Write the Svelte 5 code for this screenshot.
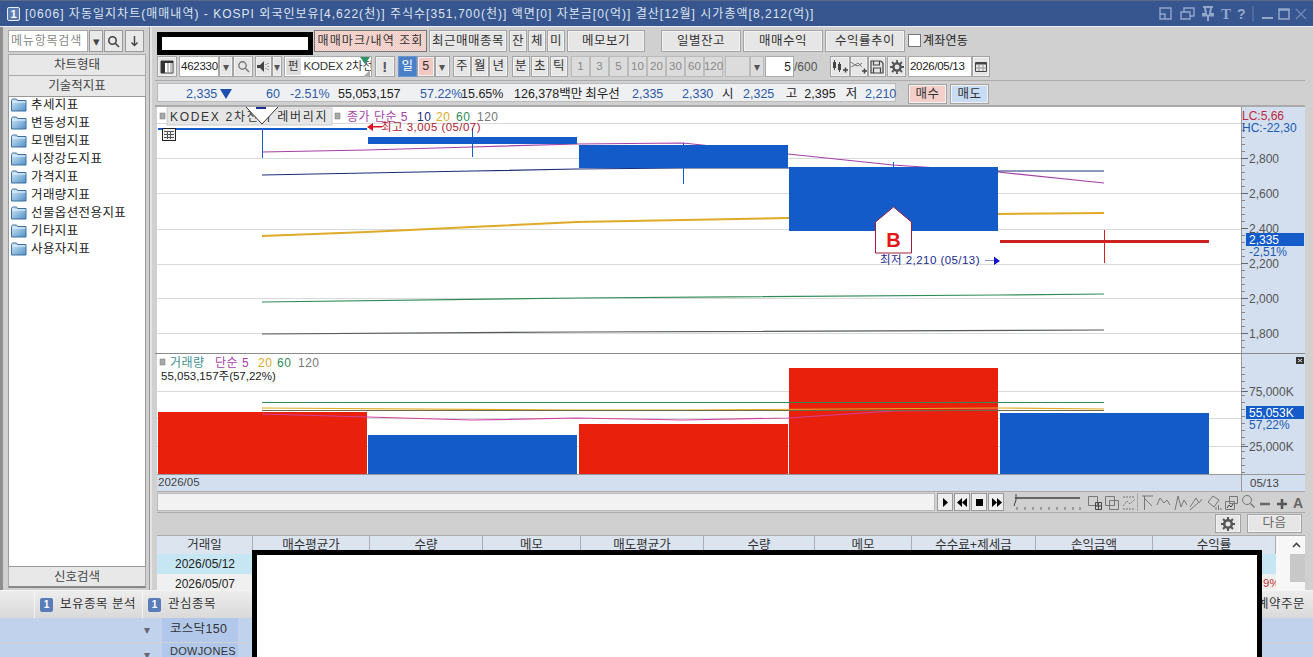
<script>
  const flow = (items, start) => {
    let cur = start;
    return items.map((i) => {
      const r = { ...i, w: i.x1 - i.x0, ml: i.x0 - cur };
      cur = i.x1;
      return r;
    });
  };
  const box = (r) => `width:${r.w}px;margin-left:${r.ml}px`;

  const row1 = flow([
    { t: '매매마크/내역 조회', x0: 314, x1: 427, c: 'pinkdot' },
    { t: '최근매매종목', x0: 429, x1: 507 },
    { t: '잔', x0: 509, x1: 527 },
    { t: '체', x0: 528, x1: 546 },
    { t: '미', x0: 547, x1: 565 },
    { t: '메모보기', x0: 567, x1: 645 },
    { t: '일별잔고', x0: 661, x1: 741 },
    { t: '매매수익', x0: 743, x1: 823 },
    { t: '수익률추이', x0: 825, x1: 905 }
  ], 314);

  const row2a = flow([
    { t: '!', x0: 375, x1: 395, c: 'bang' },
    { t: '일', x0: 398, x1: 417, c: 'day' },
    { t: '5', x0: 417, x1: 435, c: 'pink' },
    { t: '▾', x0: 435, x1: 450, c: 'arrow' },
    { t: '주', x0: 453, x1: 471 },
    { t: '월', x0: 471, x1: 489 },
    { t: '년', x0: 489, x1: 508 },
    { t: '분', x0: 512, x1: 530 },
    { t: '초', x0: 531, x1: 549 },
    { t: '틱', x0: 550, x1: 568 },
    { t: '1', x0: 571, x1: 590, c: 'off' },
    { t: '3', x0: 590, x1: 609, c: 'off' },
    { t: '5', x0: 609, x1: 628, c: 'off' },
    { t: '10', x0: 628, x1: 647, c: 'off' },
    { t: '20', x0: 647, x1: 666, c: 'off' },
    { t: '30', x0: 666, x1: 685, c: 'off' },
    { t: '60', x0: 685, x1: 704, c: 'off' },
    { t: '120', x0: 704, x1: 723, c: 'off' },
    { t: '', x0: 725, x1: 750, c: 'off' },
    { t: '▾', x0: 750, x1: 764, c: 'off arrow' }
  ], 372);

  const info = flow([
    { t: '2,335', x0: 186, x1: 232, c: 'b down' },
    { t: '60', x0: 266, x1: 279, c: 'b' },
    { t: '-2.51%', x0: 290, x1: 328, c: 'b' },
    { t: '55,053,157', x0: 338, x1: 400 },
    { t: '57.22%', x0: 420, x1: 458, c: 'b' },
    { t: '15.65%', x0: 461, x1: 498 },
    { t: '126,378백만', x0: 514, x1: 579 },
    { t: '최우선', x0: 584, x1: 621 },
    { t: '2,335', x0: 632, x1: 663, c: 'b' },
    { t: '2,330', x0: 682, x1: 713, c: 'b' },
    { t: '시', x0: 722, x1: 733 },
    { t: '2,325', x0: 743, x1: 774, c: 'b' },
    { t: '고', x0: 785, x1: 798 },
    { t: '2,395', x0: 804, x1: 836 },
    { t: '저', x0: 845, x1: 858 },
    { t: '2,210', x0: 865, x1: 896, c: 'b' }
  ], 157);

  const folders = ['추세지표', '변동성지표', '모멘텀지표', '시장강도지표', '가격지표', '거래량지표', '선물옵션전용지표', '기타지표', '사용자지표'];

  const pts = (a) => a.map((p) => p.join(',')).join(' ');
  const candles = [
    { x: 158, w: 209, y: 128, h: 2 },
    { x: 368, w: 209, y: 137, h: 7 },
    { x: 579, w: 209, y: 145, h: 23 },
    { x: 789, w: 209, y: 167, h: 64 }
  ];
  const wicks = [[262, 129, 158], [472, 128, 157], [683, 143, 184], [893, 162, 168]];
  const ma = [
    { s: '#a63fa6', w: 1.2, p: [[262, 152], [367, 150], [472, 147], [577, 144], [683, 143], [788, 154], [893, 165], [998, 172], [1104, 183]] },
    { s: '#1a2f7a', w: 1.2, p: [[262, 175], [367, 173], [472, 171], [577, 169], [683, 168], [788, 168], [893, 169], [998, 171], [1104, 171]] },
    { s: '#e0aa28', w: 2, p: [[262, 236], [367, 232], [472, 227], [577, 222], [683, 220], [788, 218], [893, 216], [998, 214], [1104, 213]] },
    { s: '#2e8b57', w: 1.2, p: [[262, 302], [577, 298], [998, 295], [1104, 294]] },
    { s: '#555c55', w: 1.2, p: [[262, 334], [577, 332], [1104, 330]] }
  ];
  const grid = [123, 158, 193, 229, 264, 298, 333];
  const yLabels = [[158, '2,800'], [193, '2,600'], [228, '2,400'], [263, '2,200'], [298, '2,000'], [333, '1,800']];
  const ticks = Array.from({ length: 34 }, (_, i) => 123 + i * 7);
  const volTicks = Array.from({ length: 16 }, (_, i) => 367 + i * 7);
  const bars = [
    { x: 158, w: 209, y: 412, f: '#e8200c' },
    { x: 368, w: 209, y: 435, f: '#125bc8' },
    { x: 579, w: 209, y: 424, f: '#e8200c' },
    { x: 789, w: 209, y: 368, f: '#e8200c' },
    { x: 1000, w: 209, y: 413, f: '#125bc8' }
  ];
  const vma = [
    { s: '#d040a0', p: [[262, 414], [367, 417], [472, 420], [577, 418], [683, 420], [788, 418], [893, 411], [998, 410]] },
    { s: '#e0aa28', p: [[262, 408], [577, 410], [683, 410], [998, 408], [1104, 409]] },
    { s: '#2e8b57', p: [[262, 402.5], [1104, 402.5]] },
    { s: '#6b6b4a', p: [[262, 410.5], [1104, 410.5]] }
  ];
  const cols = [
    ['거래일', 96], ['매수평균가', 117], ['수량', 113], ['메모', 98], ['매도평균가', 123],
    ['수량', 111], ['메모', 97], ['수수료+제세금', 124], ['손익금액', 117], ['수익률', 123]
  ];
</script>

<div class="app">
  <header class="title">
    <span class="badge">1</span>
    <span class="ttext">[0606] 자동일지차트(매매내역) - KOSPI 외국인보유[4,622(천)] 주식수[351,700(천)] 액면[0] 자본금[0(억)] 결산[12월] 시가총액[8,212(억)]</span>
    <svg class="winbtns" width="155" height="18" viewBox="0 0 155 18" fill="none" stroke="#93a6cc" stroke-width="1.4">
      <path d="M1 3h11v11H1zM1 9h5v5" />
      <path d="M22 7v7h9V7zM25 7V3h10v8h-4" />
      <path d="M44 2h10M46 2l1 7h-3v1.500h10V9h-3l1-7M49 10v6" stroke-width="2" />
      <text x="62" y="14" class="wt">T</text>
      <text x="78" y="14" class="wq">?</text>
      <path d="M94 1v15" stroke="#5b73a6" />
      <path d="M103 13h11" stroke-width="2" />
      <path d="M120 4h10v10h-10z M120 5h10" stroke-width="1.500" />
      <path d="M137 4l10 10M147 4l-10 10" stroke="#7189b8" />
    </svg>
  </header>

  <div class="body">
    <aside class="side">
      <div class="searchrow">
        <span class="sinput">메뉴항목검색</span>
        <span class="sbtn narrow">▾</span>
        <span class="sbtn">
          <svg width="13" height="13" viewBox="0 0 13 13" fill="none" stroke="#444" stroke-width="1.600"><circle cx="5.500" cy="5.500" r="3.700" /><path d="M8.300 8.300l3.700 3.700" /></svg>
        </span>
        <span class="sbtn">
          <svg width="9" height="11" viewBox="0 0 9 11" fill="none" stroke="#444" stroke-width="1.400"><path d="M4.500 0v9M1.500 6.500l3 3 3-3" /></svg>
        </span>
      </div>
      <div class="sidehead first">차트형태</div>
      <div class="sidehead">기술적지표</div>
      <ul class="tree">
        {#each folders as f}
          <li>
            <svg width="16" height="14" viewBox="0 0 16 14">
              <defs><linearGradient id="fg" x1="0" y1="0" x2="1" y2="1"><stop offset="0" stop-color="#d8ecf8" /><stop offset="1" stop-color="#4f90c8" /></linearGradient></defs>
              <path d="M.5 2.500l1-1.500h4l1 1.500h8.500v10.500H.5z" fill="url(#fg)" stroke="#3c6f9f" />
              <path d="M1.500 4h13" stroke="#eef7fd" />
            </svg>
            <span>{f}</span>
          </li>
        {/each}
      </ul>
      <div class="sidefoot">신호검색</div>
    </aside>

    <div class="gutter"></div>

    <main class="main">
      <div class="tool row1">
        {#each row1 as r}
          <span class="btn {r.c ?? ''}" style={box(r)}>{r.t}</span>
        {/each}
        <span class="check"></span>
        <span class="checklabel">계좌연동</span>
      </div>

      <div class="tool row2">
        <span class="btn icon w20">
          <svg width="14" height="14" viewBox="0 0 14 14"><path d="M1 1h12v12H1z" fill="#fff" stroke="#444" /><path d="M1 1h12v2H5v10H1z" fill="#333" /><path d="M8 3v10M11 3v10" stroke="#888" /></svg>
        </span>
        <span class="field code">462330</span>
        <span class="btn arrow w14">▾</span>
        <span class="btn icon w20">
          <svg width="13" height="13" viewBox="0 0 13 13" fill="none" stroke="#777" stroke-width="1.400"><circle cx="5.500" cy="5.500" r="3.700" /><path d="M8.300 8.300l3.700 3.700" /></svg>
        </span>
        <span class="btn icon w17 ml2">
          <svg width="13" height="11" viewBox="0 0 13 11"><path d="M0 4h3l4-4v11l-4-4H0z" fill="#444" /><path d="M9 3v1M9 7v1M11 2v1M11 5v1M11 8v1" stroke="#666" /></svg>
        </span>
        <span class="btn arrow w10">▾</span>
        <span class="fund">
          <span class="pen">펀</span><span class="fname">KODEX 2차전</span>
          <svg class="corner" width="12" height="19" viewBox="0 0 12 19"><path d="M1 0h10L6 7z" fill="#2e9268" /><path d="M11 13v6H5z" fill="#aaa" /></svg>
        </span>
        {#each row2a as r}
          <span class="btn {r.c ?? ''}" style={box(r)}>{r.t}</span>
        {/each}
        <span class="field count">5</span>
        <span class="slash">/600</span>
        <span class="btn icon w20">
          <svg width="16" height="14" viewBox="0 0 16 14" fill="#444"><path d="M1 2h3v6H1zM6 4h3v6H6z" /><path d="M2.500 0v10M7.500 2v10" stroke="#444" /><path d="M11 10h5M13.500 7.500v5" stroke="#444" stroke-width="1.500" /></svg>
        </span>
        <span class="btn icon w18">
          <svg width="16" height="14" viewBox="0 0 16 14" fill="none" stroke="#777"><path d="M0 2l4 3 3-2 4 4M0 7l4-2 3 1 4-3" /><path d="M11 11h5M13.500 8.500v5" stroke="#444" stroke-width="1.500" /></svg>
        </span>
        <span class="btn icon w18">
          <svg width="14" height="14" viewBox="0 0 14 14" fill="none" stroke="#444" stroke-width="1.200"><path d="M1 1h10l2 2v10H1z" /><path d="M3.500 1v4h6V1M3.500 13V8h7v5" /></svg>
        </span>
        <span class="btn icon w19 ml1">
          <svg width="14" height="14" viewBox="0 0 14 14"><circle cx="7" cy="7" r="3.600" fill="none" stroke="#555" stroke-width="2.400" /><path d="M7 0v3M7 11v3M0 7h3M11 7h3M2 2l2 2M10 10l2 2M12 2l-2 2M4 10l-2 2" stroke="#555" stroke-width="1.800" /></svg>
        </span>
        <span class="field date">2026/05/13</span>
        <span class="btn icon w18">
          <svg width="12" height="11" viewBox="0 0 12 11" fill="none" stroke="#444"><path d="M.5 1.500h11v9H.5z" /><path d="M.5 2.500h11" stroke-width="2" /><path d="M4 4v6M8 4v6M1 7h10" stroke="#999" /></svg>
        </span>
      </div>

      <div class="inforow">
        {#each info as r}
          <span class="cell {r.c ?? ''}" style={box(r)}>{r.t}</span>
        {/each}
        <span class="btn buy">매수</span>
        <span class="btn sell">매도</span>
      </div>

      <section class="chartframe">
        <svg class="pane price" viewBox="155 107 1150 246" width="1150" height="246">
          <rect x="157" y="107" width="1084" height="246" fill="#fff" />
          {#each grid as y}<line x1="157" x2="1241" y1={y + 0.5} y2={y + 0.5} stroke="#d9d9d9" />{/each}
          {#each ma as m}<polyline points={pts(m.p)} fill="none" stroke={m.s} stroke-width={m.w} />{/each}
          {#each wicks as w}<line x1={w[0] + 0.5} x2={w[0] + 0.5} y1={w[1]} y2={w[2]} stroke="#125bc8" />{/each}
          {#each candles as c}<rect x={c.x} y={c.y} width={c.w} height={c.h} fill="#125bc8" />{/each}
          <rect x="1000" y="240" width="209" height="3" fill="#cc2222" />
          <line x1="1104.500" x2="1104.500" y1="230" y2="263" stroke="#cc2222" />

          <rect x="160" y="113" width="5" height="6" fill="#a8a8a8" stroke="#777" stroke-width=".5" />
          <rect x="167" y="108" width="165" height="17" fill="#e6e6e6" stroke="#ccc" />
          <text x="170" y="121" class="leg wide" fill="#333">KODEX 2차전지 레버리지</text>
          <path d="M246 107l16 17 16-17z" fill="#fff" />
          <path d="M246 107l16 17 16-17" fill="none" stroke="#333" />
          <line x1="256" x2="266" y1="108" y2="108" stroke="#1a2f9a" stroke-width="2" />
          <rect x="335" y="113" width="5" height="6" fill="#a8a8a8" stroke="#777" stroke-width=".5" />
          <text x="347" y="121" class="leg" fill="#a63fa6">종가 단순 5</text>
          <text x="417" y="121" class="leg" fill="#1a2f7a">10</text>
          <text x="436" y="121" class="leg" fill="#e0aa28">20</text>
          <text x="456" y="121" class="leg" fill="#2e8b57">60</text>
          <text x="477" y="121" class="leg" fill="#777">120</text>

          <rect x="162.500" y="128.500" width="13" height="12" fill="#eee" stroke="#222" />
          <path d="M164 131.500h10M164 134.500h10M164 137.500h10M167.500 131v8M170.500 131v8" stroke="#555" />

          <path d="M367 127l6-4v3h9v1.500h-9v3.500z" fill="#d8101c" />
          <text x="381" y="131" class="note notew" fill="#b02030">최고 3,005 (05/07)</text>
          <text x="880" y="264" class="note notew" fill="#1a2a90">최저 2,210 (05/13)</text>
          <path d="M985 260.500h9v-4l6 4.500-6 4v-4h-9z" fill="#1414c8" />

          <path d="M875.500 222l18-15 18 15v31h-36z" fill="#fff" stroke="#a01c3c" />
          <text x="893.500" y="247" class="bmark" text-anchor="middle">B</text>

          <rect x="1241" y="107" width="64" height="246" fill="#d3dfee" />
          <line x1="1241.500" x2="1241.500" y1="107" y2="353" stroke="#999" />
          {#each ticks as t}<line x1="1241" x2="1245" y1={t + 0.5} y2={t + 0.5} stroke="#888" />{/each}
          {#each yLabels as l}
            <line x1="1241" x2="1248" y1={l[0] + 0.5} y2={l[0] + 0.5} stroke="#666" />
            <text x="1249" y={l[0] + 5} class="ax">{l[1]}</text>
          {/each}
          <text x="1242" y="120" class="ax red">LC:5,66</text>
          <text x="1242" y="132" class="ax blue">HC:-22,30</text>
          <rect x="1246" y="233" width="58" height="13" fill="#125bc8" />
          <text x="1249" y="244" class="ax white">2,335</text>
          <text x="1249" y="256" class="ax blue">-2,51%</text>
        </svg>

        <svg class="pane vol" viewBox="155 353 1150 121" width="1150" height="121">
          <rect x="157" y="353" width="1084" height="121" fill="#fff" />
          <line x1="155" x2="1305" y1="353.500" y2="353.500" stroke="#8a8a8a" />
          {#each [391, 418, 446] as y}<line x1="157" x2="1241" y1={y + 0.5} y2={y + 0.5} stroke="#d9d9d9" />{/each}
          {#each bars as b}<rect x={b.x} y={b.y} width={b.w} height={474 - b.y} fill={b.f} />{/each}
          {#each vma as m}<polyline points={pts(m.p)} fill="none" stroke={m.s} stroke-width="1.200" />{/each}
          <rect x="160" y="359" width="5" height="6" fill="#a8a8a8" stroke="#777" stroke-width=".5" />
          <text x="170" y="367" class="leg" fill="#3f8f8f">거래량</text>
          <text x="215" y="367" class="leg" fill="#a63fa6">단순 5</text>
          <text x="258" y="367" class="leg" fill="#e0aa28">20</text>
          <text x="277" y="367" class="leg" fill="#2e8b57">60</text>
          <text x="298" y="367" class="leg" fill="#777">120</text>
          <text x="161" y="380" class="note" fill="#222">55,053,157주(57,22%)</text>

          <rect x="1241" y="354" width="64" height="120" fill="#d3dfee" />
          <line x1="1241.500" x2="1241.500" y1="354" y2="474" stroke="#999" />
          {#each volTicks as t}<line x1="1241" x2="1245" y1={t + 0.5} y2={t + 0.5} stroke="#888" />{/each}
          <line x1="1241" x2="1248" y1="391.500" y2="391.500" stroke="#666" />
          <line x1="1241" x2="1248" y1="446.500" y2="446.500" stroke="#666" />
          <text x="1249" y="396" class="ax">75,000K</text>
          <text x="1249" y="451" class="ax">25,000K</text>
          <rect x="1246" y="406" width="58" height="13" fill="#125bc8" />
          <text x="1249" y="417" class="ax white">55,053K</text>
          <text x="1249" y="429" class="ax blue">57,22%</text>
          <rect x="1296" y="357" width="8" height="7" fill="#333" />
          <path d="M1298 359l4 3M1302 359l-4 3" stroke="#ddd" />
        </svg>

        <div class="datestrip">
          <span class="dl">2026/05</span>
          <span class="dr">05/13</span>
        </div>
      </section>

      <div class="scrollbar">
        <span class="track"></span>
        <span class="pb first"><svg width="7" height="9" viewBox="0 0 7 9"><path d="M1 0l5 4.500-5 4.500z" /></svg></span>
        <span class="pb"><svg width="11" height="9" viewBox="0 0 11 9"><path d="M5 0v9L0 4.500zM10 0v9L5 4.500z" /></svg></span>
        <span class="pb"><svg width="9" height="9" viewBox="0 0 9 9"><path d="M1 1h7v7H1z" /></svg></span>
        <span class="pb"><svg width="11" height="9" viewBox="0 0 11 9"><path d="M1 0v9l5-4.500zM6 0v9l5-4.500z" /></svg></span>
        <svg class="slider" width="70" height="18" viewBox="0 0 70 18" fill="none" stroke="#666">
          <path d="M3 5h65" stroke-width="2" />
          <path d="M4 1v6l-2 6" stroke="#444" />
          <path d="M5 14v3M13 14v3M21 14v3M29 14v3M37 14v3M45 14v3M53 14v3M61 14v3M68 14v3" />
        </svg>
        <svg class="tools" width="217" height="19" viewBox="0 0 217 19" fill="none" stroke="#777">
          <path d="M.5 3.500h9v9h-9z" /><path d="M7.500 9.500h6v7h-6zM7.500 13h6M10.500 9.500v7" stroke="#444" />
          <path d="M17.500 3.500h9v9h-9zM21.500 7.500h9v9h-9z" />
          <path d="M35 4h12M35 16h12M35 13l4-5 3 3 5-5" stroke-dasharray="2 1" />
          <path d="M49.500 0v18" stroke="#aaa" />
          <path d="M54 3h11M56.500 3v14M57 6l7 7" />
          <path d="M69 12l3-7 4 5 3-3 3 5" />
          <path d="M87 17l3-14 3 11 3-7 3 5" />
          <path d="M102 14l6-9 3 5 3-4M102 17l8-7" />
          <path d="M120 9l5-6 6 4-5 7zM128 14v3M130.500 12v5M133 15v2" />
          <path d="M141.500 3.500h8v7h-8zM137.500 8.500h9v8h-9z" /><path d="M139 15l2-3 2 2 2-3" stroke="#444" />
          <circle cx="159" cy="7" r="4.500" /><path d="M162.500 10.500l4 4" stroke-width="1.500" />
          <path d="M172 11h10" stroke="#666" stroke-width="2.500" />
          <path d="M189 11h10M194 6v10" stroke="#555" stroke-width="2.500" />
          <text x="205" y="15" class="tA">A</text>
        </svg>
      </div>

      <div class="tablebar">
        <span class="btn gear">
          <svg width="16" height="14" viewBox="0 0 16 14"><circle cx="8" cy="7" r="3.800" fill="none" stroke="#555" stroke-width="2.600" /><path d="M8 0v3M8 11v3M1 7h3M12 7h3M3 2l2 2M11 10l2 2M13 2l-2 2M5 10l-2 2" stroke="#555" stroke-width="2" /></svg>
        </span>
        <span class="btn next">다음</span>
      </div>

      <div class="grid">
        <div class="ghead">
          {#each cols as c}<span class="gcell" style={`width:${c[1]}px`}>{c[0]}</span>{/each}
        </div>
        <div class="grow sel"><span class="gd">2026/05/12</span></div>
        <div class="grow"><span class="gd">2026/05/07</span><span class="pct">9%</span></div>
        <div class="vs">
          <span class="vsup">
            <svg width="9" height="6" viewBox="0 0 9 6" fill="none" stroke="#444" stroke-width="1.600"><path d="M1 5l3.500-3.500L8 5" /></svg>
          </span>
          <span class="vsthumb"></span>
        </div>
      </div>
    </main>
  </div>

  <footer class="bottom">
    <div class="tabs">
      <span class="tab t1"><i>1</i>보유종목 분석</span>
      <span class="tab t2"><i>1</i>관심종목</span>
      <span class="tabr">예약주문</span>
    </div>
    <div class="brow">
      <span class="drop">▾</span>
      <span class="bname">코스닥150</span>
    </div>
    <div class="brow">
      <span class="drop">▾</span>
      <span class="bname small">DOWJONES</span>
    </div>
  </footer>

  <div class="mask m1"></div>
  <div class="mask m2"></div>
</div>

<style>
  :global(body) { margin: 0; background: #d0d0d0; }
  .app {
    position: relative; width: 1313px; height: 657px; overflow: hidden;
    background: #d0d0d0; color: #333;
    font: 12px/1 "Liberation Sans", "Noto Sans CJK KR", sans-serif;
    display: flex; flex-direction: column;
  }
  .title {
    height: 25px; flex: none; background: #37568f; border-top: 1px solid #5a6a86;
    display: flex; align-items: center; color: #dde4f0; position: relative;
  }
  .badge {
    width: 11px; height: 12px; margin-left: 7px; border: 1px solid #e8eef8; border-radius: 2px;
    background: #5f7cb4; color: #fff; font-size: 11px; line-height: 12px; text-align: center; font-weight: 700;
  }
  .ttext { margin-left: 5px; font-size: 12px; letter-spacing: 1.02px; white-space: nowrap; }
  .winbtns { margin-left: auto; margin-right: -1px; }
  .wt { font: 700 15px "Liberation Serif", serif; fill: #93a6cc; stroke: none; }
  .wq { font: 700 14px "Liberation Sans", sans-serif; fill: #93a6cc; stroke: none; }

  .body { height: 564px; flex: none; display: flex; border-top: 1px solid #eee; box-sizing: border-box; }
  .side {
    width: 138px; margin-left: 8px; display: flex; flex-direction: column; padding-top: 3px;
    box-sizing: content-box; height: 560px;
    position: relative;
  }
  .side::before { content: ""; position: absolute; left: -8px; top: 0; bottom: 0; width: 3px; background: #8f8f8f; }
  .searchrow { display: flex; height: 22px; }
  .sinput {
    width: 80px; box-sizing: border-box; background: #fff; border: 1px solid #aaa; color: #888;
    line-height: 20px; padding-left: 2px; letter-spacing: .8px; white-space: nowrap; overflow: hidden;
  }
  .sbtn {
    width: 19px; box-sizing: border-box; margin-left: 1px; background: #e9e9e9; border: 1px solid #999;
    display: flex; align-items: center; justify-content: center; color: #444; font-size: 13px;
  }
  .sbtn.narrow { width: 14px; }
  .sbtn:last-child { margin-left: 2px; }
  .sidehead {
    height: 21px; box-sizing: border-box; background: #e8e8e8; border: 1px solid #aaa; border-bottom: 0;
    text-align: center; line-height: 20px; font-size: 12.500px; color: #444;
  }
  .sidehead.first { margin-top: 2px; }
  .tree {
    list-style: none; margin: 0; padding: 0; height: 471px; box-sizing: border-box; background: #fff;
    border: 1px solid #999; flex: none; overflow: hidden;
  }
  .tree li { height: 18px; display: flex; align-items: center; padding-left: 1px; color: #222; font-size: 12.500px; letter-spacing: .4px; }
  .tree li:first-child { margin-top: -1px; }
  .tree li svg { margin: 0 4px 0 1px; flex: none; }
  .sidefoot {
    height: 21px; box-sizing: border-box; background: #e8e8e8; border: 1px solid #aaa; border-top: 0;
    border-bottom: 2px solid #888; text-align: center; line-height: 20px; color: #444; font-size: 12.500px;
  }
  .gutter {
    width: 9px; flex: none; position: relative;
  }
  .gutter::before {
    content: ""; position: absolute; left: 3px; top: 0; bottom: 0; width: 2px;
    background: #e4e4e4; border-left: 1px solid #999;
  }
  .main { width: 1150px; flex: none; position: relative; display: flex; flex-direction: column; padding-top: 3px; box-sizing: border-box; }

  .tool { display: flex; align-items: stretch; margin-left: 2px; }
  .row1 { height: 22px; padding-left: 157px; }
  .row2 { height: 21px; margin-top: 4px; }
  .btn {
    display: flex; align-items: center; justify-content: center; box-sizing: border-box; flex: none;
    background: #e6e6e6; border: 1px solid #a4a4a4; box-shadow: inset 0 0 0 1px #f2f2f2; color: #333;
    font-size: 12.500px; letter-spacing: .5px; white-space: nowrap;
  }
  .pinkdot {
    background: repeating-conic-gradient(#f4c4bc 0 25%, #f2e0dc 0 50%) 0 0 / 2px 2px;
    border-color: #777; box-shadow: none; letter-spacing: 1.100px; font-size: 12px;
  }
  .pink { background: #f4c8c2; }
  .day { background: #4a80c8; color: #fff; border-color: #6c94cc; box-shadow: none; }
  .bang { font-weight: 700; font-size: 15px; color: #555; }
  .off { color: #888; background: #dcdcdc; font-size: 11.500px; letter-spacing: 0; box-shadow: none; border-color: #bbb; }
  .arrow { font-size: 12px; color: #555; }
  .w10 { width: 10px; } .w14 { width: 14px; } .w17 { width: 17px; } .w18 { width: 18px; } .w19 { width: 19px; } .w20 { width: 20px; }
  .ml1 { margin-left: 1px; } .ml2 { margin-left: 2px; }
  .check { width: 13px; height: 13px; box-sizing: border-box; margin: 4px 0 0 3px; background: #fff; border: 1px solid #777; flex: none; }
  .checklabel { margin-left: 2px; align-self: center; letter-spacing: .2px; color: #222; font-size: 12px; }
  .field { background: #fff; border: 1px solid #aaa; box-sizing: border-box; display: flex; align-items: center; color: #222; flex: none; }
  .code { width: 40px; margin-left: 2px; padding-left: 1px; font-size: 11.500px; letter-spacing: -.25px; overflow: hidden; }
  .count { width: 29px; margin-left: 1px; justify-content: flex-end; padding-right: 2px; }
  .slash { width: 36px; color: #555; align-self: center; flex: none; }
  .date { width: 64px; margin-left: 2px; padding-left: 1px; font-size: 11.500px; letter-spacing: -.3px; white-space: nowrap; overflow: hidden; }
  .fund {
    width: 88px; margin-left: 2px; background: #fff; border: 1px solid #aaa; box-sizing: border-box;
    display: flex; align-items: center; position: relative; overflow: hidden; white-space: nowrap; flex: none;
  }
  .pen { background: #ddd; padding: 3px 2px; margin-left: 1px; font-size: 11.500px; }
  .fname { margin-left: 3px; font-size: 11.500px; letter-spacing: -.2px; }
  .corner { position: absolute; right: 0; top: 0; }

  .inforow {
    height: 22px; margin-top: 3px; padding-top: 2px; border-top: 1px solid #aaa; border-bottom: 2px solid #aaa;
    display: flex; align-items: center; box-sizing: content-box; padding-left: 2px; position: relative;
  }
  .inforow::before {
    content: ""; position: absolute; left: 2px; top: 2px; width: 739px; height: 19px;
    background: #eff0f2; border: 1px solid #bbb; box-sizing: border-box;
  }
  .cell { position: relative; flex: none; white-space: nowrap; text-align: center; color: #222; font-size: 12.500px; }
  .cell.b { color: #2c5aa8; }
  .cell.down { display: flex; align-items: center; justify-content: space-between; }
  .cell.down::after {
    content: ""; width: 0; height: 0; border-left: 6px solid transparent; border-right: 6px solid transparent;
    border-top: 10px solid #1c4fb0;
  }
  .buy, .sell { width: 39px; height: 20px; position: relative; }
  .buy { margin-left: 12px; background: #f4cfca; }
  .sell { margin-left: 3px; background: #c8dcf4; }

  .chartframe { margin-top: 0; display: flex; flex-direction: column; }
  .pane { display: block; flex: none; }
  .leg { font: 12px "Liberation Sans", "Noto Sans CJK KR", sans-serif; letter-spacing: .5px; }
  .leg.wide { letter-spacing: 1.7px; }
  .note { font: 11.500px "Liberation Sans", "Noto Sans CJK KR", sans-serif; }
  .note.notew { letter-spacing: .45px; }
  .ax { font: 12px "Liberation Sans", sans-serif; fill: #555; }
  .ax.red { fill: #c02840; }
  .ax.blue { fill: #1a5cb0; }
  .ax.white { fill: #fff; }
  .bmark { font: 700 20px "Liberation Sans", sans-serif; fill: #e01818; }
  .datestrip {
    height: 18px; margin-left: 2px; background: #d3dfee; border-top: 1px solid #999; border-bottom: 1px solid #aaa;
    display: flex; align-items: center; color: #444; font-size: 11.500px; position: relative; box-sizing: border-box; width: 1148px;
  }
  .dl { margin-left: 1px; }
  .dr { margin-left: auto; padding-left: 8px; border-left: 1px solid #999; line-height: 16px; box-sizing: border-box; width: 64px; }

  .scrollbar { height: 20px; margin-left: 2px; display: flex; align-items: center; }
  .track { width: 778px; height: 18px; background: #f2f2f2; border: 1px solid #bbb; box-sizing: border-box; flex: none; }
  .pb {
    width: 16px; height: 18px; margin-left: 1px; background: #eee; border: 1px solid #999; box-sizing: border-box;
    display: flex; align-items: center; justify-content: center; flex: none;
  }
  .pb.first { margin-left: 2px; }
  .slider { margin-left: 8px; flex: none; }
  .tools { margin-left: 6px; flex: none; }
  .tA { font: 700 14px "Liberation Sans", sans-serif; fill: #666; stroke: none; }

  .tablebar { height: 23px; margin-left: 2px; display: flex; justify-content: flex-end; align-items: flex-start; padding-top: 1px; border-top: 1px solid #aaa; box-sizing: border-box; }
  .gear { width: 26px; height: 19px; }
  .next { width: 55px; height: 19px; margin: 0 3px 0 6px; color: #666; letter-spacing: .5px; }

  .grid { margin-left: 2px; position: relative; flex: 1; background: #eee; border-top: 1px solid #aaa; overflow: hidden; }
  .ghead { height: 18px; display: flex; background: #dce4ef; }
  .gcell {
    flex: none; box-sizing: border-box; border-right: 1px solid #aab; text-align: center; line-height: 18px; color: #333; font-size: 12.500px;
  }
  .grow { height: 19px; display: flex; align-items: center; background: #f0f0f0; position: relative; width: 1119px; }
  .grow.sel { background: #c6e6f4; height: 20px; }
  .gd { width: 96px; text-align: center; font-size: 12px; color: #222; }
  .pct { position: absolute; left: 1106px; color: #c03030; font-size: 11.500px; }
  .vs { position: absolute; right: 0; top: 0; bottom: 0; width: 29px; background: #f7f7f7; display: flex; flex-direction: column; align-items: flex-end; }
  .vsup { height: 18px; display: flex; align-items: center; padding-right: 4px; }
  .vsthumb { width: 15px; height: 28px; background: #c8c8c8; }

  .bottom { flex: 1; display: flex; flex-direction: column; border-top: 1px solid #f4f4f4; }
  .tabs {
    height: 27px; flex: none; background: linear-gradient(#ededed, #d9d9d9); display: flex; align-items: center; position: relative;
    font-size: 12.500px; letter-spacing: .5px;
  }
  .tab { display: flex; align-items: center; white-space: nowrap; height: 100%; }
  .tab i {
    width: 13px; height: 14px; margin-right: 7px; background: #5a7cb8; color: #fff; border-radius: 2px; font-style: normal;
    font-size: 10px; text-align: center; line-height: 14px; font-weight: 700; letter-spacing: 0;
  }
  .t1 { padding: 0 0 0 5px; margin-left: 34px; border-left: 1px solid #f4f4f4; border-right: 1px solid #f4f4f4; width: 109px; box-sizing: border-box; }
  .t2 { margin-left: 5px; }
  .tabr { margin-left: auto; margin-right: 8px; }
  .brow {
    height: 24px; flex: none; background: #c0d2ec; margin-bottom: 1px; display: flex; align-items: center; position: relative;
  }
  .drop { margin-left: 144px; width: 18px; color: #667; font-size: 12px; }
  .bname { width: 76px; height: 24px; line-height: 22px; background: #b2c8ea; padding-left: 8px; box-sizing: border-box; letter-spacing: .3px; color: #333; font-size: 12.500px; }
  .bname.small { font-size: 11px; line-height: 17px; }

  .mask { position: absolute; background: #fff; border: 5px solid #000; box-sizing: border-box; }
  .m1 { left: 157px; top: 32px; width: 156px; height: 23px; }
  .m2 { left: 252px; top: 550px; width: 1010px; height: 120px; }
</style>
